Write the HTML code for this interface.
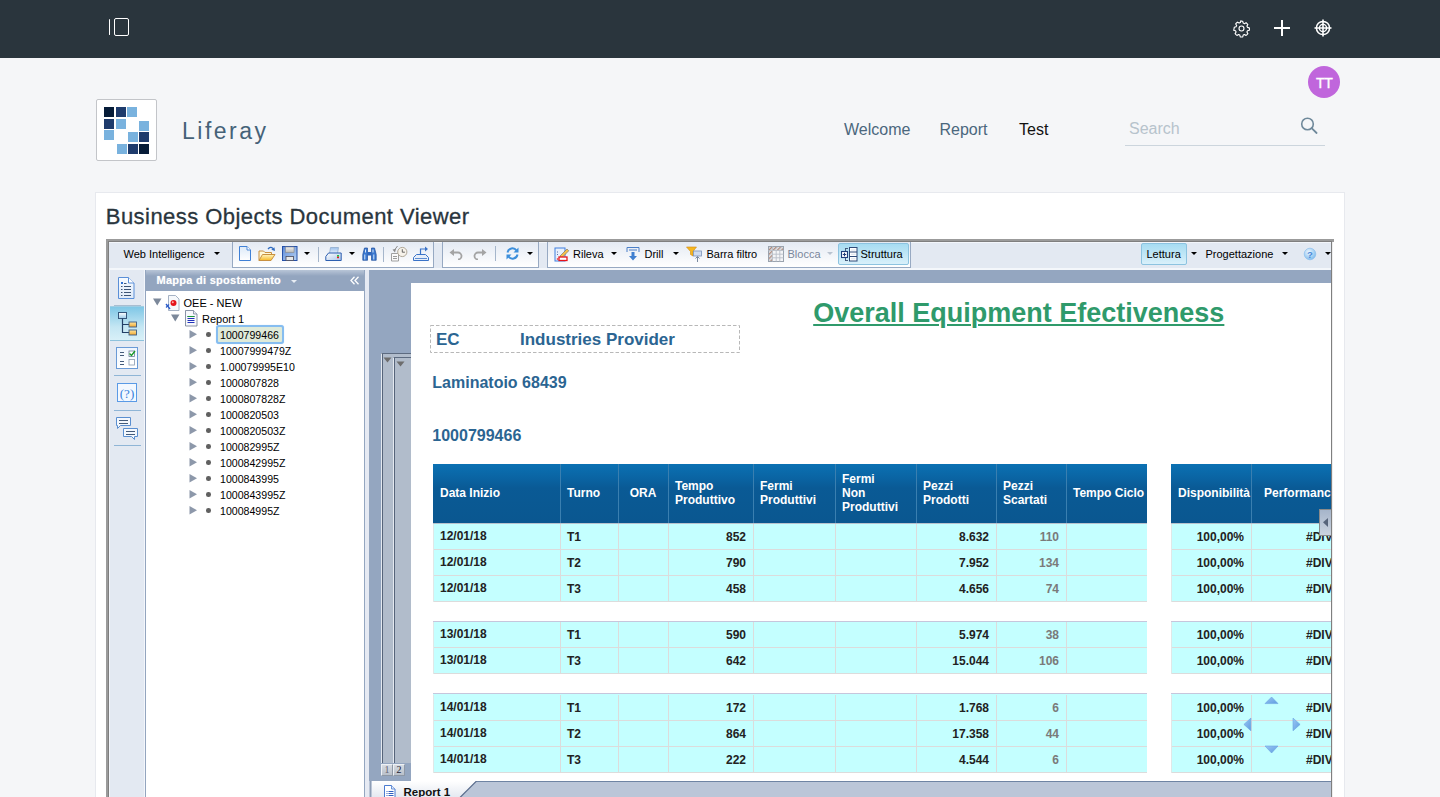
<!DOCTYPE html>
<html><head><meta charset="utf-8">
<style>
*{margin:0;padding:0;box-sizing:border-box}
html,body{width:1440px;height:797px;overflow:hidden;background:#f5f6f8;font-family:"Liberation Sans",sans-serif}
.a{position:absolute}
.t{position:absolute;white-space:nowrap;line-height:1}
#topbar{left:0;top:0;width:1440px;height:58px;background:#2a353d}
.hd{position:absolute;font-size:12px;font-weight:bold;color:#fff;line-height:14px;white-space:nowrap}
.cl,.cr{position:absolute;font-size:12px;font-weight:bold;color:#222;line-height:14px;white-space:nowrap}
.cr{text-align:right}
#portlet{left:95px;top:192px;width:1250px;height:620px;background:#fff;border:1px solid #e7e9ee}
</style></head><body>
<!-- top bar -->
<div id="topbar" class="a">
  <div class="a" style="left:109.2px;top:19px;width:1.3px;height:16px;background:#fff;border-radius:1px"></div>
  <div class="a" style="left:114px;top:18px;width:15px;height:18px;border:1.6px solid #fff;border-radius:2px"></div>
  <svg class="a" style="left:1231.5px;top:18.5px" width="19" height="19" viewBox="0 0 20 20">
    <path d="M10 2.2l1.3.2.5 1.9 1.3.6 1.7-1 1 .9 .9 1-1 1.7.6 1.3 1.9.5.2 1.3-.2 1.3-1.9.5-.6 1.3 1 1.7-.9 1-1 .9-1.7-1-1.3.6-.5 1.9-1.3.2-1.3-.2-.5-1.9-1.3-.6-1.7 1-1-.9-.9-1 1-1.7-.6-1.3-1.9-.5L2.2 10l.2-1.3 1.9-.5.6-1.3-1-1.7.9-1 1-.9 1.7 1 1.3-.6.5-1.9z" fill="none" stroke="#fff" stroke-width="1.2" stroke-linejoin="round"/>
    <circle cx="10" cy="10" r="2.6" fill="none" stroke="#fff" stroke-width="1.2"/>
  </svg>
  <div class="a" style="left:1274px;top:27px;width:16px;height:2px;background:#fff"></div>
  <div class="a" style="left:1281px;top:20px;width:2px;height:16px;background:#fff"></div>
  <svg class="a" style="left:1313px;top:18px" width="20" height="20" viewBox="0 0 20 20">
    <circle cx="10" cy="10" r="6.6" fill="none" stroke="#fff" stroke-width="1.5"/>
    <circle cx="10" cy="10" r="3.6" fill="none" stroke="#fff" stroke-width="1.4"/>
    <path d="M10 1.5v17M1.5 10h17" stroke="#fff" stroke-width="1.6"/>
  </svg>
</div>
<!-- avatar -->
<div class="a" style="left:1308px;top:66px;width:32px;height:32px;border-radius:50%;background:#c066dc"></div>
<div class="t" style="left:1316px;top:75.5px;font-size:14px;color:#fff;letter-spacing:-0.3px;-webkit-text-stroke:0.4px #fff">TT</div>

<!-- logo -->
<div class="a" style="left:96px;top:99px;width:61px;height:62px;background:#fff;border:1.5px solid #c3c5c9;border-radius:2px"></div>
<div class="a" style="left:104px;top:107px;width:10px;height:10px;background:#061c38"></div>
<div class="a" style="left:115.5px;top:107px;width:10px;height:10px;background:#1e3b6c"></div>
<div class="a" style="left:127px;top:107px;width:10px;height:10px;background:#79b2de"></div>
<div class="a" style="left:104px;top:118.5px;width:10px;height:10px;background:#1e3b6c"></div>
<div class="a" style="left:115.5px;top:118.5px;width:10px;height:10px;background:#79b2de"></div>
<div class="a" style="left:139px;top:121px;width:10px;height:10px;background:#79b2de"></div>
<div class="a" style="left:104px;top:130px;width:10px;height:10px;background:#79b2de"></div>
<div class="a" style="left:128px;top:132px;width:10px;height:10px;background:#79b2de"></div>
<div class="a" style="left:139px;top:132px;width:10px;height:10px;background:#1e3b6c"></div>
<div class="a" style="left:116.5px;top:143.5px;width:10px;height:10px;background:#79b2de"></div>
<div class="a" style="left:128px;top:143.5px;width:10px;height:10px;background:#1e3b6c"></div>
<div class="a" style="left:139px;top:143.5px;width:10px;height:10px;background:#061c38"></div>
<div class="t" style="left:182px;top:119.8px;font-size:23px;color:#456278;letter-spacing:2.5px">Liferay</div>

<!-- nav -->
<div class="t" style="left:844px;top:122px;font-size:16px;color:#4b677d">Welcome</div>
<div class="t" style="left:939.5px;top:122px;font-size:16px;color:#4b677d">Report</div>
<div class="t" style="left:1019px;top:122px;font-size:16px;color:#111">Test</div>
<div class="t" style="left:1129px;top:121px;font-size:16px;color:#b7c3cc">Search</div>
<div class="a" style="left:1125px;top:145px;width:200px;height:1px;background:#ccd5dd"></div>
<svg class="a" style="left:1298px;top:115px" width="22" height="22" viewBox="0 0 22 22">
  <circle cx="9.5" cy="9" r="5.8" fill="none" stroke="#6f899b" stroke-width="1.6"/>
  <path d="M13.6 13.2l5 4.8" stroke="#6f899b" stroke-width="1.8" stroke-linecap="round"/>
</svg>

<!-- portlet -->
<div id="portlet" class="a"></div>
<div class="t" style="left:105.8px;top:206.3px;font-size:22px;color:#29353d;-webkit-text-stroke:0.3px #29353d;letter-spacing:0.45px">Business Objects Document Viewer</div>

<div class="a" style="left:106px;top:239px;width:1226px;height:570px;background:#7f7f7f"></div>
<div class="a" style="left:1332px;top:242px;width:1px;height:570px;background:#ededed"></div>
<div class="a" style="left:1332px;top:239px;width:1.5px;height:3px;background:#9b9b9b"></div>
<div class="a" style="left:106px;top:239px;width:1226px;height:2px;background:#9b9b9b"></div>
<div class="a" style="left:106px;top:239px;width:2px;height:570px;background:#9b9b9b"></div>
<div class="a" style="left:109px;top:242px;width:1222px;height:28px;background:#e3e9f2;border-top:1px solid #f3f6fb"></div>
<div class="a" style="left:109px;top:268px;width:1222px;height:2px;background:#f4f7fb"></div>
<div class="a" style="left:232px;top:242px;width:202px;height:26px;background:linear-gradient(#e4eaf3,#ffffff);border:1px solid #97a9c2;border-top:none"></div>
<div class="a" style="left:442px;top:242px;width:97px;height:26px;background:linear-gradient(#e4eaf3,#ffffff);border:1px solid #97a9c2;border-top:none"></div>
<div class="a" style="left:547px;top:242px;width:364px;height:26px;background:linear-gradient(#e4eaf3,#ffffff);border:1px solid #97a9c2;border-top:none"></div>
<div class="t" style="left:123.5px;top:248.6885px;font-size:11px;font-weight:400;color:#000">Web Intelligence</div>
<svg class="a" style="left:213.5px;top:251px" width="6" height="5"><path d="M0 1h6l-3.0 3.0z" fill="#000"/></svg>
<svg class="a" style="left:239px;top:246px" width="12" height="15"><defs><linearGradient id="nd" x1="0" y1="0" x2="0" y2="1"><stop offset="0" stop-color="#dce9f8"/><stop offset="1" stop-color="#ffffff"/></linearGradient></defs><path d="M.5 .5h7.5l3.5 3.5v10.5H.5z" fill="url(#nd)" stroke="#3f80d6" stroke-width="1"/><path d="M8 .5v3.5h3.5" fill="#fff" stroke="#3f80d6" stroke-width=".9"/></svg>
<svg class="a" style="left:258px;top:246px" width="18" height="16"><defs><linearGradient id="fo" x1="0" y1="0" x2="0" y2="1"><stop offset="0" stop-color="#fff6c0"/><stop offset="1" stop-color="#f7b928"/></linearGradient></defs><path d="M1 14.5V5h4.5l1.5 1.5h6.5v2" fill="#fff8d8" stroke="#c89040" stroke-width="1"/><path d="M1 14.5l3.5-6h12.5l-4 6z" fill="url(#fo)" stroke="#c89040" stroke-width="1"/><path d="M10 3.2C11.5 1 13.5 .8 15 2.6" fill="none" stroke="#2f6bc0" stroke-width="1.2"/><path d="M13.3 3.8L17 5 16.4 1.2z" fill="#2f6bc0"/></svg>
<svg class="a" style="left:282px;top:246px" width="16" height="15"><defs><linearGradient id="sv" x1="0" y1="0" x2="1" y2="1"><stop offset="0" stop-color="#5a88d8"/><stop offset="1" stop-color="#b9d3f2"/></linearGradient><linearGradient id="sm" x1="0" y1="0" x2="0" y2="1"><stop offset="0" stop-color="#f0f0f0"/><stop offset="1" stop-color="#b8b8b8"/></linearGradient></defs><rect x=".5" y=".5" width="14.5" height="14" fill="url(#sv)" stroke="#2550a8" stroke-width="1"/><rect x="3.5" y="1" width="8.5" height="5.5" fill="url(#sm)" stroke="#8a8a8a" stroke-width=".6"/><rect x="4" y="10.5" width="7.5" height="4" fill="#e8e8e8" stroke="#4a4a5a" stroke-width=".8"/></svg>
<svg class="a" style="left:304.0px;top:251px" width="6" height="5"><path d="M0 1h6l-3.0 3.0z" fill="#000"/></svg>
<div class="a" style="left:318px;top:247px;width:1px;height:15px;background:#a5b6cb"></div>
<svg class="a" style="left:325px;top:246px" width="18" height="16"><defs><linearGradient id="pp" x1="0" y1="0" x2="0" y2="1"><stop offset="0" stop-color="#9cc0ec"/><stop offset="1" stop-color="#e8f1fb"/></linearGradient><linearGradient id="pr" x1="0" y1="0" x2="1" y2="1"><stop offset="0" stop-color="#ffffff"/><stop offset="1" stop-color="#a9c4e8"/></linearGradient></defs><path d="M4.5 7.5L5.5 1.5h8l-1 6z" fill="url(#pp)" stroke="#8aa6c8" stroke-width=".7"/><path d="M.8 14.5V10.5L3.5 7h12.7v7.5z" fill="url(#pr)" stroke="#2d5fb0" stroke-width="1"/><rect x="12" y="9" width="2" height="1.6" fill="#16d03a"/><rect x="12" y="10.6" width="2" height="1.6" fill="#e02020"/></svg>
<svg class="a" style="left:348.5px;top:251px" width="6" height="5"><path d="M0 1h6l-3.0 3.0z" fill="#000"/></svg>
<svg class="a" style="left:362px;top:247px" width="15" height="14"><path d="M.8 13.3V7.5L2.5 1h3v12.3zM14.2 13.3V7.5L12.5 1h-3v12.3z" fill="#3a78d0" stroke="#1f4f9e" stroke-width=".7"/><rect x="5.5" y="5" width="4" height="3.5" fill="#2f68c0"/><path d="M2.8 7.5v5M11.8 7.5v5M3.5 2.5v3M11 2.5v3" stroke="#d6e8fb" stroke-width="1"/></svg>
<div class="a" style="left:383px;top:247px;width:1px;height:15px;background:#a5b6cb"></div>
<svg class="a" style="left:390px;top:245px" width="18" height="17"><path d="M1.5 8.5h7v7.5h-7z" fill="#fafafa" stroke="#a0a0a0" stroke-width="1"/><path d="M3 11.5h4M3 13.5h4" stroke="#909090" stroke-width=".9"/><circle cx="12.3" cy="7" r="4.6" fill="#f6f2ea" stroke="#b0a898" stroke-width="1"/><path d="M12.3 4.2v3h2.6" fill="none" stroke="#555" stroke-width=".9"/><path d="M7.5 1L4.2 5.5" stroke="#8a8a8a" stroke-width="1"/><path d="M2.5 4.5L5 7.5 6 4z" fill="#8a8a8a"/></svg>
<svg class="a" style="left:412px;top:245px" width="18" height="17"><path d="M1.5 15.5v-3l3-3h9l3 3v3z" fill="#e6eef9" stroke="#3a73c8"/><path d="M3 13.5h12" stroke="#3a73c8" stroke-width=".8"/><path d="M8.5 10V4h5" fill="none" stroke="#3a73c8" stroke-width="1.2"/><path d="M13 1.5l3 2.5-3 2.5z" fill="#3a73c8"/></svg>
<svg class="a" style="left:449px;top:248px" width="14" height="12"><path d="M4 4.5h5a3.5 3.5 0 0 1 0 7" fill="none" stroke="#a4a4a4" stroke-width="1.8"/><path d="M.5 4.5L5 1v7z" fill="#a4a4a4"/></svg>
<svg class="a" style="left:473px;top:248px" width="14" height="12"><path d="M10 4.5H5a3.5 3.5 0 0 0 0 7" fill="none" stroke="#a4a4a4" stroke-width="1.8"/><path d="M13.5 4.5L9 1v7z" fill="#a4a4a4"/></svg>
<div class="a" style="left:495px;top:246px;width:1px;height:15px;background:#a5b6cb"></div>
<svg class="a" style="left:505px;top:246px" width="15" height="15"><path d="M2.5 6.5A5 5 0 0 1 11.5 4.5" fill="none" stroke="#3d8fdb" stroke-width="2"/><path d="M13.5 1.5v5h-5z" fill="#3d8fdb"/><path d="M12.5 8.5A5 5 0 0 1 3.5 10.5" fill="none" stroke="#3d8fdb" stroke-width="2"/><path d="M1.5 13.5v-5h5z" fill="#3d8fdb"/></svg>
<svg class="a" style="left:526.5px;top:251px" width="6" height="5"><path d="M0 1h6l-3.0 3.0z" fill="#000"/></svg>
<svg class="a" style="left:554px;top:247px" width="16" height="15"><rect x="1" y="1" width="10" height="13" fill="#e8f0fb" stroke="#3f7fe0" stroke-width="1"/><path d="M3 5h1M3 7.5h1" stroke="#5b6fb0" stroke-width="1"/><path d="M6 9l7-7 1.8 1.8-7 7z" fill="#f5c04a" stroke="#555" stroke-width=".5"/><rect x="5" y="10" width="8" height="3.5" fill="#fff" stroke="#e8141b" stroke-width="1.3"/><circle cx="3.5" cy="12" r=".8" fill="#e8141b"/></svg>
<div class="t" style="left:573px;top:248.6885px;font-size:11px;font-weight:400;color:#000">Rileva</div>
<svg class="a" style="left:610.5px;top:251px" width="6" height="5"><path d="M0 1h6l-3.0 3.0z" fill="#000"/></svg>
<svg class="a" style="left:626px;top:246px" width="14" height="16"><path d="M1 6V1.5h12V6" fill="none" stroke="#4a7fc8" stroke-width="1"/><path d="M3 4h8" stroke="#4a7fc8" stroke-width="1"/><path d="M5.5 6v4H3l4 4.5 4-4.5H8.5V6z" fill="#3f7fd0"/></svg>
<div class="t" style="left:644.5px;top:248.6885px;font-size:11px;font-weight:400;color:#000">Drill</div>
<svg class="a" style="left:673.0px;top:251px" width="6" height="5"><path d="M0 1h6l-3.0 3.0z" fill="#000"/></svg>
<svg class="a" style="left:686px;top:246px" width="18" height="17"><path d="M.5 1h10L7 5.5V10L4.5 8.5V5.5z" fill="#f6b720" stroke="#d08a10" stroke-width=".6"/><rect x="7.5" y="5" width="8" height="5" fill="#cfdcf0" stroke="#7a92b8" stroke-width=".8"/><path d="M11.5 16V10.5M9.5 12.5l2-2 2 2" fill="none" stroke="#7a8aa0" stroke-width="1"/></svg>
<div class="t" style="left:706.5px;top:248.6885px;font-size:11px;font-weight:400;color:#000">Barra filtro</div>
<svg class="a" style="left:768px;top:246px" width="16" height="16"><defs><pattern id="hp" width="3" height="3" patternUnits="userSpaceOnUse" patternTransform="rotate(45)"><rect width="3" height="3" fill="#d9dde3"/><rect width="1.2" height="3" fill="#b08a7a"/></pattern></defs><rect x=".5" y=".5" width="15" height="15" fill="#f4f5f7" stroke="#9aa3ae" stroke-width="1"/><rect x="1" y="1" width="14" height="3.5" fill="url(#hp)"/><rect x="1" y="1" width="3.5" height="14" fill="url(#hp)"/><path d="M4.5 .5v15M.5 4.5h15M8.2 4.5v11M11.8 4.5v11M4.5 8.2h11M4.5 11.8h11" stroke="#b9bfc8" stroke-width=".9"/></svg>
<div class="t" style="left:787.5px;top:248.6885px;font-size:11px;font-weight:400;color:#7a879c">Blocca</div>
<svg class="a" style="left:827.0px;top:251px" width="6" height="5"><path d="M0 1h6l-3.0 3.0z" fill="#b9c3d0"/></svg>
<div class="a" style="left:838px;top:243px;width:71px;height:22px;background:linear-gradient(#a6dcf2,#d9f0fa);border:1px solid #8cc3e0;border-radius:2px"></div>
<svg class="a" style="left:841px;top:247px" width="17" height="15"><path d="M4 1.5h3M4 13.5h3M4.5 1.5v2.5M4.5 11v2.5" fill="none" stroke="#3a4f70" stroke-width=".9"/><rect x=".5" y="4.5" width="6" height="6" fill="#fff" stroke="#1f3f7a" stroke-width="1.1"/><path d="M3.5 5.8v3.4M1.8 7.5h3.4" stroke="#1f3f7a" stroke-width="1.1"/><rect x="8.5" y=".5" width="7.5" height="13.5" fill="#fff" stroke="#2f4a78" stroke-width="1"/><path d="M8.5 5h7.5M8.5 9.5h7.5" stroke="#2f4a78" stroke-width="1"/><path d="M10 3h4.5M10 7.3h4.5M10 11.8h4.5" stroke="#d4dbe6" stroke-width=".8"/></svg>
<div class="t" style="left:860.5px;top:248.6885px;font-size:11px;font-weight:400;color:#000">Struttura</div>
<div class="a" style="left:1141px;top:243px;width:46px;height:22px;background:linear-gradient(#a6dcf2,#d9f0fa);border:1px solid #8cc3e0;border-radius:2px"></div>
<div class="t" style="left:1146.5px;top:248.6885px;font-size:11px;font-weight:400;color:#000">Lettura</div>
<svg class="a" style="left:1190.5px;top:251px" width="6" height="5"><path d="M0 1h6l-3.0 3.0z" fill="#000"/></svg>
<div class="t" style="left:1205.5px;top:248.6885px;font-size:11px;font-weight:400;color:#000">Progettazione</div>
<svg class="a" style="left:1281.5px;top:251px" width="6" height="5"><path d="M0 1h6l-3.0 3.0z" fill="#000"/></svg>
<svg class="a" style="left:1303px;top:247px" width="14" height="14"><defs><radialGradient id="hg" cx=".4" cy=".35" r=".7"><stop offset="0" stop-color="#eef8ff"/><stop offset="1" stop-color="#7ab8ec"/></radialGradient></defs><circle cx="7" cy="7" r="5.8" fill="url(#hg)" stroke="#8cc0ee" stroke-width=".7"/><text x="7" y="10.8" font-family="Liberation Sans" font-weight="bold" font-size="9.5" text-anchor="middle" fill="#4a8ad8">?</text></svg>
<svg class="a" style="left:1324.5px;top:251px" width="6" height="5"><path d="M0 1h6l-3.0 3.0z" fill="#000"/></svg>
<div class="a" style="left:109px;top:270px;width:1222px;height:540px;background:#94a6c0"></div>
<div class="a" style="left:109px;top:270px;width:36px;height:540px;background:#e3e9f2;border-left:1px solid #f3f6fb;border-right:1px solid #f3f6fb"></div>
<div class="a" style="left:145px;top:270px;width:220px;height:540px;background:#fff;border-left:1px solid #93a5bf;border-right:1px solid #94a6c0"></div>
<div class="a" style="left:146px;top:270px;width:218px;height:21px;background:linear-gradient(#b8c5d7 0,#93a5bf 6px,#93a5bf)"></div>
<svg class="a" style="left:117px;top:276px" width="19" height="24"><path d="M1.5 1.5h10l5.5 5.5v15.5H1.5z" fill="url(#d1)" stroke="#5a8fd8" stroke-width="1"/><path d="M11.5 1.5V7H17" fill="#fff" stroke="#5a8fd8" stroke-width="1"/><rect x="4" y="6" width="2" height="2" fill="#2f6fd0"/><path d="M7 7.5h2.5" stroke="#445b7a" stroke-width="1"/><path d="M4 10.5h1.5M4 13.5h1.5M4 16.5h1.5M4 19.5h1.5M7 10.5h7M7 13.5h7M7 16.5h7M7 19.5h7" stroke="#3d5475" stroke-width="1"/><defs><linearGradient id="d1" x1="0" y1="0" x2="0" y2="1"><stop offset="0" stop-color="#f7fbff"/><stop offset="1" stop-color="#dfeaf8"/></linearGradient></defs></svg>
<div class="a" style="left:114px;top:305px;width:27px;height:1px;background:#a9bdd0"></div>
<div class="a" style="left:110px;top:306px;width:34px;height:35px;background:linear-gradient(#7fc7e6,#c4e6f3 60%,#d8f0f8);border-top:1px solid #9fcde3;border-bottom:1px solid #8ec2dc"></div>
<svg class="a" style="left:117px;top:311px" width="22" height="25"><rect x="1.5" y="1.5" width="8" height="6" fill="url(#t1)" stroke="#35557a" stroke-width="1"/><path d="M5.5 7.5V21.5H12M5.5 13.5H12" fill="none" stroke="#233f66" stroke-width="1.2"/><rect x="12" y="11" width="7.5" height="5" fill="url(#t2)" stroke="#3b5a80" stroke-width=".9"/><rect x="12" y="19" width="7.5" height="5" fill="url(#t2)" stroke="#3b5a80" stroke-width=".9"/><defs><linearGradient id="t1" x1="0" y1="0" x2="0" y2="1"><stop offset="0" stop-color="#fff"/><stop offset="1" stop-color="#9ccbea"/></linearGradient><linearGradient id="t2" x1="0" y1="0" x2="0" y2="1"><stop offset="0" stop-color="#ffe6a0"/><stop offset="1" stop-color="#f0a830"/></linearGradient></defs></svg>
<svg class="a" style="left:116px;top:347px" width="22" height="22"><rect x=".5" y=".5" width="21" height="21" fill="url(#c3)" stroke="#6a9ad6" stroke-width="1"/><path d="M4 5.5h4M4 8.5h4M4 14.5h4M4 17.5h4" stroke="#445b7a" stroke-width="1"/><rect x="13" y="4" width="5.5" height="5.5" fill="#fff" stroke="#6a7f99" stroke-width=".8"/><path d="M13.5 6.5l2 2 3.5-4.5" fill="none" stroke="#1a9a2a" stroke-width="1.4"/><rect x="13" y="12.5" width="5.5" height="5.5" fill="#fff" stroke="#8b9bb0" stroke-width=".8"/><defs><linearGradient id="c3" x1="0" y1="0" x2="0" y2="1"><stop offset="0" stop-color="#eef5fe"/><stop offset="1" stop-color="#fff"/></linearGradient></defs></svg>
<div class="a" style="left:114px;top:375px;width:27px;height:1px;background:#8fb5d6"></div>
<svg class="a" style="left:117px;top:383px" width="20" height="19"><rect x=".5" y=".5" width="19" height="18" fill="#f3f8ff" stroke="#5a9ae6" stroke-width="1"/><text x="10" y="14.5" font-family="Liberation Serif" font-size="13" text-anchor="middle" fill="#3a82dc">(?)</text></svg>
<div class="a" style="left:114px;top:410px;width:27px;height:1px;background:#8fb5d6"></div>
<svg class="a" style="left:115px;top:416px" width="24" height="26"><path d="M1.5 1.5h14v8h-10l-3 3v-3h-1z" fill="#f4f8fd" stroke="#5a8fd0" stroke-width="1"/><path d="M4 4.5h9M4 7.5h9" stroke="#445b7a" stroke-width="1"/><path d="M8.5 12.5h14v8h-3v3l-3-3h-8z" fill="#f4f8fd" stroke="#5a8fd0" stroke-width="1"/><path d="M11 15.5h9M11 18.5h9" stroke="#445b7a" stroke-width="1"/></svg>
<div class="a" style="left:114px;top:445px;width:27px;height:1px;background:#8fb5d6"></div>
<div class="t" style="left:156.5px;top:275.4885px;font-size:11px;font-weight:bold;color:#fff;letter-spacing:.27px;text-shadow:0 0 1px #c9d3e0">Mappa di spostamento</div>
<svg class="a" style="left:290.5px;top:279px" width="6" height="5"><path d="M0 1h6l-3.0 3.0z" fill="#e8edf4"/></svg>
<svg class="a" style="left:350px;top:276px" width="10" height="9"><path d="M4.5 .8L1 4.5l3.5 3.7M8.5 .8L5 4.5l3.5 3.7" fill="none" stroke="#fff" stroke-width="1.3"/></svg>
<svg class="a" style="left:152.5px;top:298px" width="9" height="8"><path d="M0 .5h8.5l-4.25 7z" fill="#7c889a"/></svg>
<svg class="a" style="left:165px;top:295px" width="15" height="16"><path d="M3.5 .5h7l3.5 3.5v11.5h-10.5z" fill="#f6f8fb" stroke="#8fa0b5" stroke-width=".8"/><circle cx="8.5" cy="8" r="3" fill="#e5151b"/><circle cx="7.8" cy="7.2" r="1" fill="#ffb0a8"/><path d="M1 9l4 5" stroke="#2a5ac8" stroke-width="1.3"/><path d="M1 12.5l3-3" stroke="#2a5ac8" stroke-width="1.1"/></svg>
<div class="t" style="left:183.5px;top:297.9885px;font-size:11px;font-weight:400;color:#000">OEE - NEW</div>
<svg class="a" style="left:171px;top:314px" width="9" height="8"><path d="M0 .5h8.5l-4.25 7z" fill="#7c889a"/></svg>
<svg class="a" style="left:185px;top:310px" width="13" height="17"><path d="M.5 .5h8l3.5 3.5v12H.5z" fill="#f8f9fc" stroke="#6d7a90" stroke-width=".8"/><path d="M8.5 .5v3.5h3.5" fill="#e8ecf2" stroke="#6d7a90" stroke-width=".7"/><path d="M2.5 6.5h7M2.5 8.5h7M2.5 10.5h7M2.5 12.5h7" stroke="#2233bb" stroke-width="1"/><path d="M2.5 6.5h7" stroke="#1a9a3a" stroke-width="1"/></svg>
<div class="t" style="left:202px;top:313.9885px;font-size:11px;font-weight:400;color:#000">Report 1</div>
<div class="a" style="left:216px;top:325px;width:68px;height:19px;background:#dfead9;border:2px solid #86bdf0;border-radius:3px;box-shadow:0 0 1px #a8d0f8"></div>
<svg class="a" style="left:189px;top:329.5px" width="9" height="9"><path d="M.5 0l7.5 4.25L.5 8.5z" fill="#8d98aa"/></svg>
<div class="a" style="left:206.2px;top:332.2px;width:4.6px;height:4.6px;border-radius:50%;background:#606060"></div>
<div class="t" style="left:220px;top:329.7271px;font-size:10.6px;color:#000">1000799466</div>
<svg class="a" style="left:189px;top:345.5px" width="9" height="9"><path d="M.5 0l7.5 4.25L.5 8.5z" fill="#8d98aa"/></svg>
<div class="a" style="left:206.2px;top:348.2px;width:4.6px;height:4.6px;border-radius:50%;background:#606060"></div>
<div class="t" style="left:220px;top:345.7271px;font-size:10.6px;color:#000">10007999479Z</div>
<svg class="a" style="left:189px;top:361.5px" width="9" height="9"><path d="M.5 0l7.5 4.25L.5 8.5z" fill="#8d98aa"/></svg>
<div class="a" style="left:206.2px;top:364.2px;width:4.6px;height:4.6px;border-radius:50%;background:#606060"></div>
<div class="t" style="left:220px;top:361.7271px;font-size:10.6px;color:#000">1.00079995E10</div>
<svg class="a" style="left:189px;top:377.5px" width="9" height="9"><path d="M.5 0l7.5 4.25L.5 8.5z" fill="#8d98aa"/></svg>
<div class="a" style="left:206.2px;top:380.2px;width:4.6px;height:4.6px;border-radius:50%;background:#606060"></div>
<div class="t" style="left:220px;top:377.7271px;font-size:10.6px;color:#000">1000807828</div>
<svg class="a" style="left:189px;top:393.5px" width="9" height="9"><path d="M.5 0l7.5 4.25L.5 8.5z" fill="#8d98aa"/></svg>
<div class="a" style="left:206.2px;top:396.2px;width:4.6px;height:4.6px;border-radius:50%;background:#606060"></div>
<div class="t" style="left:220px;top:393.7271px;font-size:10.6px;color:#000">1000807828Z</div>
<svg class="a" style="left:189px;top:409.5px" width="9" height="9"><path d="M.5 0l7.5 4.25L.5 8.5z" fill="#8d98aa"/></svg>
<div class="a" style="left:206.2px;top:412.2px;width:4.6px;height:4.6px;border-radius:50%;background:#606060"></div>
<div class="t" style="left:220px;top:409.7271px;font-size:10.6px;color:#000">1000820503</div>
<svg class="a" style="left:189px;top:425.5px" width="9" height="9"><path d="M.5 0l7.5 4.25L.5 8.5z" fill="#8d98aa"/></svg>
<div class="a" style="left:206.2px;top:428.2px;width:4.6px;height:4.6px;border-radius:50%;background:#606060"></div>
<div class="t" style="left:220px;top:425.7271px;font-size:10.6px;color:#000">1000820503Z</div>
<svg class="a" style="left:189px;top:441.5px" width="9" height="9"><path d="M.5 0l7.5 4.25L.5 8.5z" fill="#8d98aa"/></svg>
<div class="a" style="left:206.2px;top:444.2px;width:4.6px;height:4.6px;border-radius:50%;background:#606060"></div>
<div class="t" style="left:220px;top:441.7271px;font-size:10.6px;color:#000">100082995Z</div>
<svg class="a" style="left:189px;top:457.5px" width="9" height="9"><path d="M.5 0l7.5 4.25L.5 8.5z" fill="#8d98aa"/></svg>
<div class="a" style="left:206.2px;top:460.2px;width:4.6px;height:4.6px;border-radius:50%;background:#606060"></div>
<div class="t" style="left:220px;top:457.7271px;font-size:10.6px;color:#000">1000842995Z</div>
<svg class="a" style="left:189px;top:473.5px" width="9" height="9"><path d="M.5 0l7.5 4.25L.5 8.5z" fill="#8d98aa"/></svg>
<div class="a" style="left:206.2px;top:476.2px;width:4.6px;height:4.6px;border-radius:50%;background:#606060"></div>
<div class="t" style="left:220px;top:473.7271px;font-size:10.6px;color:#000">1000843995</div>
<svg class="a" style="left:189px;top:489.5px" width="9" height="9"><path d="M.5 0l7.5 4.25L.5 8.5z" fill="#8d98aa"/></svg>
<div class="a" style="left:206.2px;top:492.2px;width:4.6px;height:4.6px;border-radius:50%;background:#606060"></div>
<div class="t" style="left:220px;top:489.7271px;font-size:10.6px;color:#000">1000843995Z</div>
<svg class="a" style="left:189px;top:505.5px" width="9" height="9"><path d="M.5 0l7.5 4.25L.5 8.5z" fill="#8d98aa"/></svg>
<div class="a" style="left:206.2px;top:508.2px;width:4.6px;height:4.6px;border-radius:50%;background:#606060"></div>
<div class="t" style="left:220px;top:505.72710000000006px;font-size:10.6px;color:#000">100084995Z</div>
<div class="a" style="left:365px;top:270px;width:4px;height:540px;background:#e6eaf3"></div>
<div class="a" style="left:411px;top:283px;width:920px;height:498px;background:#fff"></div>
<div class="a" style="left:381px;top:353px;width:30px;height:428px;background:#b1bccb;border-left:1px solid #e4e9f0;border-top:1px solid #5d6b80"></div>
<div class="a" style="left:382px;top:354px;width:1px;height:428px;background:#56647a"></div>
<div class="a" style="left:393px;top:357px;width:18px;height:424px;background:#b1bccb;border-left:1px solid #e4e9f0;border-top:1px solid #5d6b80"></div>
<div class="a" style="left:394px;top:358px;width:1px;height:424px;background:#56647a"></div>
<svg class="a" style="left:382px;top:356px" width="12" height="8"><path d="M1.5 1.5h8l-4 5z" fill="#6d6d6d"/></svg>
<svg class="a" style="left:395px;top:360px" width="12" height="8"><path d="M1.5 1.5h8l-4 5z" fill="#6d6d6d"/></svg>
<div class="a" style="left:381px;top:763px;width:30px;height:18px;background:#94a6c0"></div>
<div class="a" style="left:381px;top:764px;width:12px;height:12px;background:linear-gradient(#d6dbe2,#b9c0ca);border:1px solid #8e98a6;border-top-color:#eef1f5;border-left-color:#eef1f5;font-family:'Liberation Serif',serif;font-size:10px;line-height:10px;text-align:center;color:#667">1</div>
<div class="a" style="left:393px;top:764px;width:12px;height:12px;background:linear-gradient(#d6dbe2,#b9c0ca);border:1px solid #8e98a6;border-top-color:#eef1f5;border-left-color:#eef1f5;font-family:'Liberation Serif',serif;font-size:10px;line-height:10px;text-align:center;color:#223">2</div>
<div class="a" style="left:411px;top:283px;width:920px;height:498px;overflow:hidden">
<div class="a" style="left:-411px;top:-283px;width:1331px;height:781px">
<div class="a" style="left:433px;top:464px;width:714px;height:59px;background:linear-gradient(#0b71b3 0px,#0a64a3 14px,#0a5a95 24px,#0a5790 59px)"></div>
<div class="a" style="left:560px;top:464px;width:1px;height:59px;background:#3a7fb0"></div>
<div class="a" style="left:618px;top:464px;width:1px;height:59px;background:#3a7fb0"></div>
<div class="a" style="left:668px;top:464px;width:1px;height:59px;background:#3a7fb0"></div>
<div class="a" style="left:753px;top:464px;width:1px;height:59px;background:#3a7fb0"></div>
<div class="a" style="left:835px;top:464px;width:1px;height:59px;background:#3a7fb0"></div>
<div class="a" style="left:916px;top:464px;width:1px;height:59px;background:#3a7fb0"></div>
<div class="a" style="left:996px;top:464px;width:1px;height:59px;background:#3a7fb0"></div>
<div class="a" style="left:1066px;top:464px;width:1px;height:59px;background:#3a7fb0"></div>
<div class="a hd" style="left:440px;top:486.2px">Data Inizio</div>
<div class="a hd" style="left:567px;top:486.2px">Turno</div>
<div class="a hd" style="left:618px;top:486.2px;width:50px;text-align:center">ORA</div>
<div class="a hd" style="left:675px;top:479.2px">Tempo<br>Produttivo</div>
<div class="a hd" style="left:760px;top:479.2px">Fermi<br>Produttivi</div>
<div class="a hd" style="left:842px;top:472.2px">Fermi<br>Non<br>Produttivi</div>
<div class="a hd" style="left:923px;top:479.2px">Pezzi<br>Prodotti</div>
<div class="a hd" style="left:1003px;top:479.2px">Pezzi<br>Scartati</div>
<div class="a hd" style="left:1073px;top:486.2px">Tempo Ciclo</div>
<div class="a" style="left:1171px;top:464px;width:229px;height:59px;background:linear-gradient(#0b71b3 0px,#0a64a3 14px,#0a5a95 24px,#0a5790 59px)"></div>
<div class="a" style="left:1251px;top:464px;width:1px;height:59px;background:#3a7fb0"></div>
<div class="a hd" style="left:1178px;top:486.2px">Disponibilità</div>
<div class="a hd" style="left:1264px;top:486.2px">Performance</div>
<div class="a" style="left:433px;top:523px;width:714px;height:79px;background:#c4ffff"></div>
<div class="a" style="left:433px;top:523px;width:714px;height:1px;background:#b9c2cc"></div>
<div class="a" style="left:433px;top:549px;width:714px;height:1px;background:#dcdcdc"></div>
<div class="a" style="left:433px;top:575px;width:714px;height:1px;background:#dcdcdc"></div>
<div class="a" style="left:433px;top:601px;width:714px;height:1px;background:#dcdcdc"></div>
<div class="a" style="left:560px;top:524px;width:1px;height:78px;background:#dcdcdc"></div>
<div class="a" style="left:618px;top:524px;width:1px;height:78px;background:#dcdcdc"></div>
<div class="a" style="left:668px;top:524px;width:1px;height:78px;background:#dcdcdc"></div>
<div class="a" style="left:753px;top:524px;width:1px;height:78px;background:#dcdcdc"></div>
<div class="a" style="left:835px;top:524px;width:1px;height:78px;background:#dcdcdc"></div>
<div class="a" style="left:916px;top:524px;width:1px;height:78px;background:#dcdcdc"></div>
<div class="a" style="left:996px;top:524px;width:1px;height:78px;background:#dcdcdc"></div>
<div class="a" style="left:1066px;top:524px;width:1px;height:78px;background:#dcdcdc"></div>
<div class="a" style="left:433px;top:524px;width:1px;height:78px;background:#e0e8e8"></div>
<div class="a" style="left:1171px;top:523px;width:229px;height:79px;background:#c4ffff"></div>
<div class="a" style="left:1171px;top:523px;width:229px;height:1px;background:#b9c2cc"></div>
<div class="a" style="left:1171px;top:549px;width:229px;height:1px;background:#dcdcdc"></div>
<div class="a" style="left:1171px;top:575px;width:229px;height:1px;background:#dcdcdc"></div>
<div class="a" style="left:1171px;top:601px;width:229px;height:1px;background:#dcdcdc"></div>
<div class="a" style="left:1251px;top:524px;width:1px;height:78px;background:#dcdcdc"></div>
<div class="a" style="left:1171px;top:524px;width:1px;height:78px;background:#e0e8e8"></div>
<div class="a cl" style="left:440px;top:529px">12/01/18</div>
<div class="a cl" style="left:567px;top:530px">T1</div>
<div class="a cr" style="left:668px;top:530px;width:78px">852</div>
<div class="a cr" style="left:916px;top:530px;width:73px">8.632</div>
<div class="a cr" style="left:996px;top:530px;width:63px;color:#7a7a7a">110</div>
<div class="a cr" style="left:1171px;top:530px;width:73px">100,00%</div>
<div class="a cl" style="left:1306px;top:530px">#DIV/0!</div>
<div class="a cl" style="left:440px;top:555px">12/01/18</div>
<div class="a cl" style="left:567px;top:556px">T2</div>
<div class="a cr" style="left:668px;top:556px;width:78px">790</div>
<div class="a cr" style="left:916px;top:556px;width:73px">7.952</div>
<div class="a cr" style="left:996px;top:556px;width:63px;color:#7a7a7a">134</div>
<div class="a cr" style="left:1171px;top:556px;width:73px">100,00%</div>
<div class="a cl" style="left:1306px;top:556px">#DIV/0!</div>
<div class="a cl" style="left:440px;top:581px">12/01/18</div>
<div class="a cl" style="left:567px;top:582px">T3</div>
<div class="a cr" style="left:668px;top:582px;width:78px">458</div>
<div class="a cr" style="left:916px;top:582px;width:73px">4.656</div>
<div class="a cr" style="left:996px;top:582px;width:63px;color:#7a7a7a">74</div>
<div class="a cr" style="left:1171px;top:582px;width:73px">100,00%</div>
<div class="a cl" style="left:1306px;top:582px">#DIV/0!</div>
<div class="a" style="left:433px;top:621px;width:714px;height:53px;background:#c4ffff"></div>
<div class="a" style="left:433px;top:621px;width:714px;height:1px;background:#c6c6dc"></div>
<div class="a" style="left:433px;top:647px;width:714px;height:1px;background:#dcdcdc"></div>
<div class="a" style="left:433px;top:673px;width:714px;height:1px;background:#dcdcdc"></div>
<div class="a" style="left:560px;top:622px;width:1px;height:52px;background:#dcdcdc"></div>
<div class="a" style="left:618px;top:622px;width:1px;height:52px;background:#dcdcdc"></div>
<div class="a" style="left:668px;top:622px;width:1px;height:52px;background:#dcdcdc"></div>
<div class="a" style="left:753px;top:622px;width:1px;height:52px;background:#dcdcdc"></div>
<div class="a" style="left:835px;top:622px;width:1px;height:52px;background:#dcdcdc"></div>
<div class="a" style="left:916px;top:622px;width:1px;height:52px;background:#dcdcdc"></div>
<div class="a" style="left:996px;top:622px;width:1px;height:52px;background:#dcdcdc"></div>
<div class="a" style="left:1066px;top:622px;width:1px;height:52px;background:#dcdcdc"></div>
<div class="a" style="left:433px;top:622px;width:1px;height:52px;background:#e0e8e8"></div>
<div class="a" style="left:1171px;top:621px;width:229px;height:53px;background:#c4ffff"></div>
<div class="a" style="left:1171px;top:621px;width:229px;height:1px;background:#c6c6dc"></div>
<div class="a" style="left:1171px;top:647px;width:229px;height:1px;background:#dcdcdc"></div>
<div class="a" style="left:1171px;top:673px;width:229px;height:1px;background:#dcdcdc"></div>
<div class="a" style="left:1251px;top:622px;width:1px;height:52px;background:#dcdcdc"></div>
<div class="a" style="left:1171px;top:622px;width:1px;height:52px;background:#e0e8e8"></div>
<div class="a cl" style="left:440px;top:627px">13/01/18</div>
<div class="a cl" style="left:567px;top:628px">T1</div>
<div class="a cr" style="left:668px;top:628px;width:78px">590</div>
<div class="a cr" style="left:916px;top:628px;width:73px">5.974</div>
<div class="a cr" style="left:996px;top:628px;width:63px;color:#7a7a7a">38</div>
<div class="a cr" style="left:1171px;top:628px;width:73px">100,00%</div>
<div class="a cl" style="left:1306px;top:628px">#DIV/0!</div>
<div class="a cl" style="left:440px;top:653px">13/01/18</div>
<div class="a cl" style="left:567px;top:654px">T3</div>
<div class="a cr" style="left:668px;top:654px;width:78px">642</div>
<div class="a cr" style="left:916px;top:654px;width:73px">15.044</div>
<div class="a cr" style="left:996px;top:654px;width:63px;color:#7a7a7a">106</div>
<div class="a cr" style="left:1171px;top:654px;width:73px">100,00%</div>
<div class="a cl" style="left:1306px;top:654px">#DIV/0!</div>
<div class="a" style="left:433px;top:694px;width:714px;height:79px;background:#c4ffff"></div>
<div class="a" style="left:433px;top:693px;width:714px;height:2px;background:#c4ffff"></div>
<div class="a" style="left:433px;top:693px;width:714px;height:1px;background:#c6c6dc"></div>
<div class="a" style="left:433px;top:720px;width:714px;height:1px;background:#dcdcdc"></div>
<div class="a" style="left:433px;top:746px;width:714px;height:1px;background:#dcdcdc"></div>
<div class="a" style="left:433px;top:772px;width:714px;height:1px;background:#dcdcdc"></div>
<div class="a" style="left:560px;top:695px;width:1px;height:78px;background:#dcdcdc"></div>
<div class="a" style="left:618px;top:695px;width:1px;height:78px;background:#dcdcdc"></div>
<div class="a" style="left:668px;top:695px;width:1px;height:78px;background:#dcdcdc"></div>
<div class="a" style="left:753px;top:695px;width:1px;height:78px;background:#dcdcdc"></div>
<div class="a" style="left:835px;top:695px;width:1px;height:78px;background:#dcdcdc"></div>
<div class="a" style="left:916px;top:695px;width:1px;height:78px;background:#dcdcdc"></div>
<div class="a" style="left:996px;top:695px;width:1px;height:78px;background:#dcdcdc"></div>
<div class="a" style="left:1066px;top:695px;width:1px;height:78px;background:#dcdcdc"></div>
<div class="a" style="left:433px;top:695px;width:1px;height:78px;background:#e0e8e8"></div>
<div class="a" style="left:1171px;top:694px;width:229px;height:79px;background:#c4ffff"></div>
<div class="a" style="left:1171px;top:693px;width:229px;height:2px;background:#c4ffff"></div>
<div class="a" style="left:1171px;top:693px;width:229px;height:1px;background:#c6c6dc"></div>
<div class="a" style="left:1171px;top:720px;width:229px;height:1px;background:#dcdcdc"></div>
<div class="a" style="left:1171px;top:746px;width:229px;height:1px;background:#dcdcdc"></div>
<div class="a" style="left:1171px;top:772px;width:229px;height:1px;background:#dcdcdc"></div>
<div class="a" style="left:1251px;top:695px;width:1px;height:78px;background:#dcdcdc"></div>
<div class="a" style="left:1171px;top:695px;width:1px;height:78px;background:#e0e8e8"></div>
<div class="a cl" style="left:440px;top:700px">14/01/18</div>
<div class="a cl" style="left:567px;top:701px">T1</div>
<div class="a cr" style="left:668px;top:701px;width:78px">172</div>
<div class="a cr" style="left:916px;top:701px;width:73px">1.768</div>
<div class="a cr" style="left:996px;top:701px;width:63px;color:#7a7a7a">6</div>
<div class="a cr" style="left:1171px;top:701px;width:73px">100,00%</div>
<div class="a cl" style="left:1306px;top:701px">#DIV/0!</div>
<div class="a cl" style="left:440px;top:726px">14/01/18</div>
<div class="a cl" style="left:567px;top:727px">T2</div>
<div class="a cr" style="left:668px;top:727px;width:78px">864</div>
<div class="a cr" style="left:916px;top:727px;width:73px">17.358</div>
<div class="a cr" style="left:996px;top:727px;width:63px;color:#7a7a7a">44</div>
<div class="a cr" style="left:1171px;top:727px;width:73px">100,00%</div>
<div class="a cl" style="left:1306px;top:727px">#DIV/0!</div>
<div class="a cl" style="left:440px;top:752px">14/01/18</div>
<div class="a cl" style="left:567px;top:753px">T3</div>
<div class="a cr" style="left:668px;top:753px;width:78px">222</div>
<div class="a cr" style="left:916px;top:753px;width:73px">4.544</div>
<div class="a cr" style="left:996px;top:753px;width:63px;color:#7a7a7a">6</div>
<div class="a cr" style="left:1171px;top:753px;width:73px">100,00%</div>
<div class="a cl" style="left:1306px;top:753px">#DIV/0!</div>
<svg class="a" style="left:430px;top:325px" width="311" height="29"><rect x=".5" y=".5" width="309" height="27" fill="none" stroke="#b8b8b8" stroke-width="1" stroke-dasharray="3.5 2"/></svg>
<div class="t" style="left:436px;top:330.5095px;font-size:17px;font-weight:bold;color:#2b6592">EC</div>
<div class="t" style="left:520px;top:330.5095px;font-size:17px;font-weight:bold;color:#2b6592">Industries Provider</div>
<div class="t" style="left:432.3px;top:375.456px;font-size:16px;font-weight:bold;color:#2b6592">Laminatoio 68439</div>
<div class="t" style="left:432.3px;top:428.456px;font-size:16px;font-weight:bold;color:#2b6592">1000799466</div>
<div class="t" style="left:813.2px;top:299.7445px;font-size:27px;font-weight:bold;color:#2f9a6b;text-decoration:underline;text-underline-offset:2px;text-decoration-thickness:2px">Overall Equipment Efectiveness</div>
<svg class="a" style="left:1240px;top:694px" width="64" height="62"><defs><linearGradient id="na" x1="0" y1="0" x2="1" y2="1"><stop offset="0" stop-color="#9cc8f4"/><stop offset="1" stop-color="#5d9be0"/></linearGradient></defs><path d="M31.6 3L38 9.6H25z" fill="url(#na)" stroke="#6aa2e0" stroke-width=".6"/><path d="M25 52H38L31.6 59z" fill="url(#na)" stroke="#6aa2e0" stroke-width=".6"/><path d="M3.9 30.4L10.9 24.1V36.8z" fill="url(#na)" stroke="#6aa2e0" stroke-width=".6"/><path d="M53 24.1L60.1 30.4 53 36.8z" fill="url(#na)" stroke="#6aa2e0" stroke-width=".6"/></svg>
<div class="a" style="left:1319px;top:509px;width:13px;height:27px;background:linear-gradient(#a6b5ca,#cad3df);border:1px solid #8a8a8a;border-right:none"></div>
<svg class="a" style="left:1322px;top:517px" width="8" height="11"><path d="M1 5.3L6 1v9z" fill="#56647a"/></svg>
</div></div>
<svg class="a" style="left:369px;top:781px" width="962" height="20"><defs><linearGradient id="tg" x1="0" y1="0" x2="0" y2="1"><stop offset="0" stop-color="#ffffff"/><stop offset="1" stop-color="#e3e8f0"/></linearGradient></defs><rect x="0" y="0" width="962" height="20" fill="#bbc6d8"/><path d="M107 0.5H962" stroke="#6f84a3" stroke-width="1"/><path d="M3 0H107.5L91 17H3z" fill="url(#tg)"/><path d="M107.5 0L90.5 17" stroke="#56698a" stroke-width="1.1"/><path d="M1.5 0v17" stroke="#8d9db5" stroke-width="1"/></svg>
<svg class="a" style="left:383px;top:785px" width="14" height="14"><path d="M1.5 .5h7l3.5 3.5v10h-10.5z" fill="#fff" stroke="#4a7bd0"/><path d="M8.5 .5v3.5h3.5" fill="#dfe8f7" stroke="#4a7bd0" stroke-width=".8"/><path d="M3.5 6.5h1M3.5 8.5h1M3.5 10.5h1M5.5 6.5h5M5.5 8.5h5M5.5 10.5h5" stroke="#2f5fc0" stroke-width="1"/></svg>
<div class="t" style="left:403.5px;top:786.56525px;font-size:11.5px;font-weight:bold;color:#111">Report 1</div>
</body></html>
